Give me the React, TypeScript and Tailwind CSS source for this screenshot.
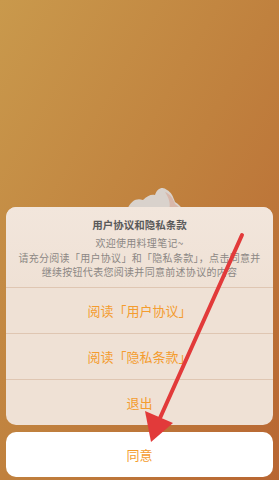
export default function App() {
  const font = { fontFamily: '"Noto Sans CJK SC", "Noto Sans", sans-serif' }
  return (
    <div
      className="relative w-[279px] h-[480px] overflow-hidden flex flex-col justify-end px-[6px] pb-[3px] bg-gradient-to-br from-[#c9994c] via-[#c0813e] to-[#b86632]"
      style={font}
    >
      {/* thing peeking out behind the sheet */}
      <svg className="absolute left-[125px] top-[186px]" width="60" height="24" viewBox="0 0 60 24">
        <path d="M2 24 C6 14 12 12 18 14 C22 10 26 8 30 9 C32 2 38 0 42 4 C46 6 48 10 50 16 C54 18 56 21 58 24 Z" fill="#d9d2cc" />
        <path d="M40 6 C45 8 48 12 50 18 C53 20 55 22 56 24 L44 24 C46 18 44 12 40 6 Z" fill="#d8b7aa" />
      </svg>

      <div className="relative bg-[#efe1d5] rounded-[10px] mb-[7px] overflow-hidden">
        <div className="h-[80px] px-[6px] pt-[11px] text-center bg-gradient-to-b from-[#f2e6dc] to-[#efe1d5]">
          <div className="text-[10.5px] leading-[14px] font-bold text-[#5a5a5a]">用户协议和隐私条款</div>
          <div className="mt-[4px] text-[10px] leading-[14.5px] text-[#8c8784] tracking-[0.3px]">
            欢迎使用料理笔记~
            <br />
            请充分阅读「用户协议」和「隐私条款」，点击同意并
            <br />
            继续按钮代表您阅读并同意前述协议的内容
          </div>
        </div>
        <div className="h-[46px] border-t border-[#dfc6b2] flex items-center justify-center text-[13px] text-[#f49c2e]">
          阅读「用户协议」
        </div>
        <div className="h-[46px] border-t border-[#dfc6b2] flex items-center justify-center text-[13px] text-[#f49c2e]">
          阅读「隐私条款」
        </div>
        <div className="h-[46px] border-t border-[#dfc6b2] flex items-center justify-center text-[13px] text-[#f49c2e]">
          退出
        </div>
      </div>

      <div className="h-[45px] bg-white rounded-[10px] flex items-center justify-center text-[13px] text-[#f49c2e]">
        同意
      </div>

      {/* red annotation arrow */}
      <svg className="absolute inset-0 pointer-events-none" width="279" height="480" viewBox="0 0 279 480">
        <line x1="242" y1="235" x2="160" y2="418" stroke="#e23a3a" strokeWidth="4" strokeLinecap="round" />
        <polygon points="151,442 145,411 173,423" fill="#e23a3a" />
      </svg>
    </div>
  )
}
